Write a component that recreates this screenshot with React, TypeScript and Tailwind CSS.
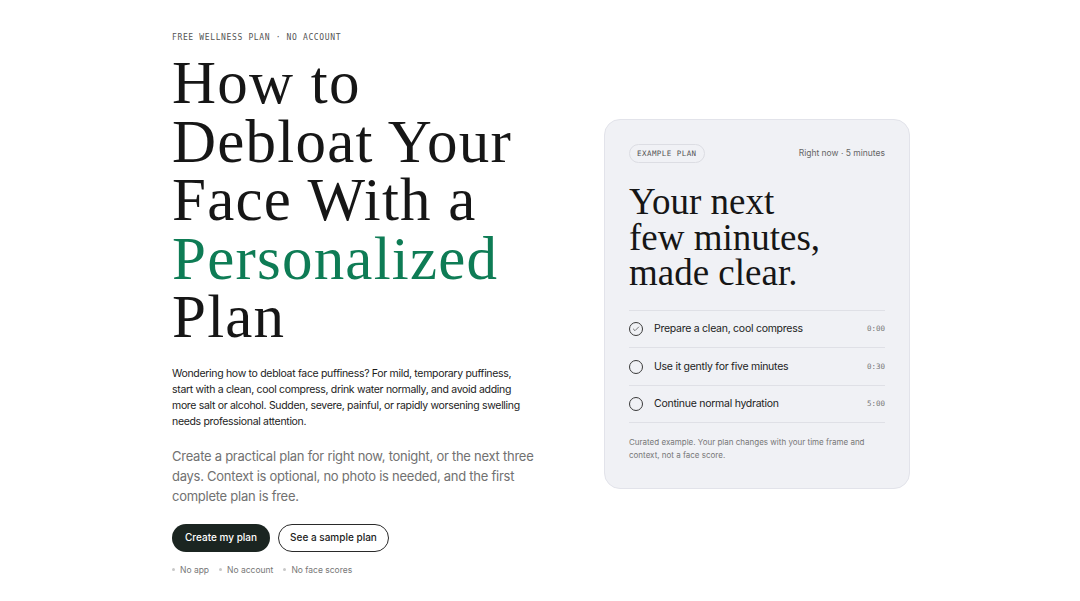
import { Check } from 'lucide-react';

const steps = [
  { label: 'Prepare a clean, cool compress', time: '0:00', done: true },
  { label: 'Use it gently for five minutes', time: '0:30', done: false },
  { label: 'Continue normal hydration', time: '5:00', done: false },
];

const perks = ['No app', 'No account', 'No face scores'];

const serif = "font-['Liberation_Serif',serif]";
const sans = "font-['Inter',sans-serif]";
const mono = "font-['DejaVu_Sans_Mono',monospace]";

export default function App() {
  return (
    <div className={`min-h-screen bg-white ${sans} text-[#1c1c1c]`}>
      <div className="ml-[172px] flex w-[738px] items-start justify-between pt-[32px]">
        {/* Hero copy */}
        <div className="w-[362px]">
          <p className={`${mono} text-[8px] tracking-[0.08em] text-[#555]`}>
            FREE WELLNESS PLAN · NO ACCOUNT
          </p>
          <h1 className={`${serif} mt-[10px] text-[61px] leading-[58.5px] tracking-[0.02em] text-[#161616]`}>
            How to
            <br />
            Debloat Your
            <br />
            Face With a
            <br />
            <span className="text-[#0e7c55]">Personalized</span>
            <br />
            Plan
          </h1>
          <p className="mt-[19px] w-[360px] text-[10.5px] leading-[16px] tracking-[-0.03em] text-[#1c1c1c]">
            Wondering how to debloat face puffiness? For mild, temporary puffiness, start with a clean, cool
            compress, drink water normally, and avoid adding more salt or alcohol. Sudden, severe, painful, or
            rapidly worsening swelling needs professional attention.
          </p>
          <p className="mt-[16px] w-[362px] text-[13px] leading-[20px] tracking-[-0.02em] text-[#717171]">
            Create a practical plan for right now, tonight, or the next three days. Context is optional, no photo
            is needed, and the first complete plan is free.
          </p>
          <div className="mt-[18px] flex gap-2">
            <button className="h-[28px] rounded-full bg-[#1b2521] px-[13px] text-[10px] font-medium text-white">
              Create my plan
            </button>
            <button className="h-[28px] rounded-full border border-[#2a2a2a] bg-white px-[11px] text-[10px] font-medium text-[#1c1c1c]">
              See a sample plan
            </button>
          </div>
          <div className="mt-[12px] flex gap-[10px] text-[8.5px] text-[#777]">
            {perks.map((p) => (
              <span key={p} className="flex items-center gap-[5px]">
                <span className="h-[3px] w-[3px] rounded-full bg-[#c8c8c8]" />
                {p}
              </span>
            ))}
          </div>
        </div>

        {/* Example plan card */}
        <div className="mt-[87px] w-[306px] rounded-[16px] border border-[#e2e3ea] bg-[#f0f1f5] px-[24px] pt-[24px] pb-[26px]">
          <div className="flex items-center justify-between">
            <span className={`${mono} rounded-full border border-[#dcdde3] px-[7px] py-[3px] text-[7.5px] tracking-[0.06em] text-[#555]`}>
              EXAMPLE PLAN
            </span>
            <span className="text-[8.5px] text-[#666]">Right now · 5 minutes</span>
          </div>
          <h2 className={`${serif} mt-[21px] text-[37px] leading-[35.5px] text-[#161616]`}>
            Your next
            <br />
            few minutes,
            <br />
            made clear.
          </h2>
          <div className="mt-[19px] border-t border-[#dfe0e6]">
            {steps.map((s) => (
              <div key={s.label} className="flex h-[37.5px] items-center border-b border-[#dfe0e6]">
                <span className="flex h-[14px] w-[14px] items-center justify-center rounded-full border border-[#3a3a3a]">
                  {s.done && <Check className="h-[8px] w-[8px] text-[#3a3a3a]" strokeWidth={2} />}
                </span>
                <span className="ml-[11px] flex-1 text-[10.5px] tracking-[-0.025em] text-[#222]">{s.label}</span>
                <span className={`${mono} text-[7.5px] text-[#777]`}>{s.time}</span>
              </div>
            ))}
          </div>
          <p className="mt-[13px] text-[8px] leading-[13px] text-[#777]">
            Curated example. Your plan changes with your time frame and context, not a face score.
          </p>
        </div>
      </div>
    </div>
  );
}
